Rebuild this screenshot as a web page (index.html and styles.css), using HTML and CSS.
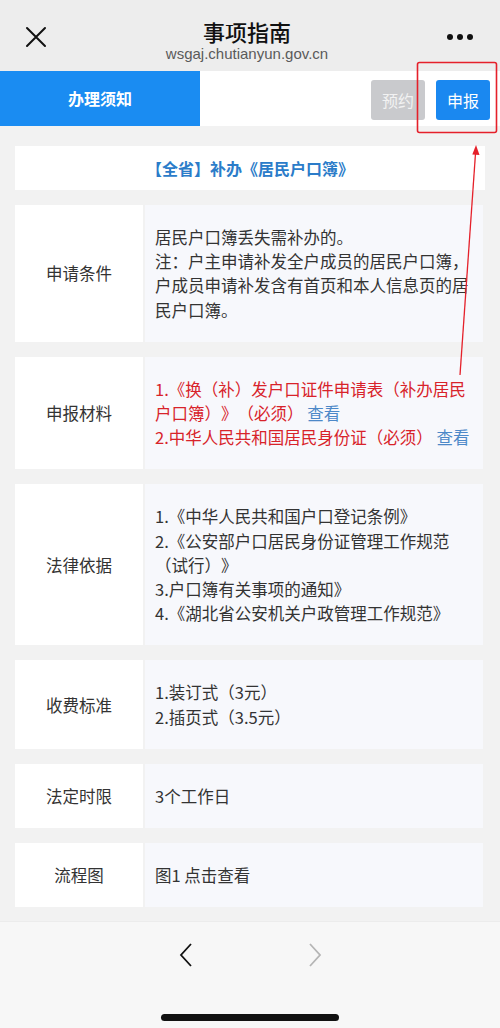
FILE: index.html
```html
<!DOCTYPE html>
<html lang="zh">
<head>
<meta charset="utf-8">
<title>事项指南</title>
<link rel="stylesheet" href="styles.css">
</head>
<body>
<div class="page">
  <header class="topbar">
    <svg class="close" width="22" height="22" viewBox="0 0 22 22"><path d="M2 2 L20 20 M20 2 L2 20" stroke="#111" stroke-width="2" fill="none" stroke-linecap="round"/></svg>
    <div class="titles">
      <div class="title">事项指南</div>
      <div class="url">wsgaj.chutianyun.gov.cn</div>
    </div>
    <svg class="more" width="26" height="8" viewBox="0 0 26 8"><circle cx="3" cy="4" r="3" fill="#111"/><circle cx="13" cy="4" r="3" fill="#111"/><circle cx="23" cy="4" r="3" fill="#111"/></svg>
  </header>

  <nav class="tabs">
    <div class="tab-active">办理须知</div>
    <div class="actions">
      <div class="btn btn-gray">预约</div>
      <div class="btn btn-blue">申报</div>
    </div>
  </nav>

  <main class="content">
    <div class="heading">【全省】补办《居民户口簿》</div>

    <div class="row">
      <div class="label">申请条件</div>
      <div class="value">居民户口簿丢失需补办的。<br>注：户主申请补发全户成员的居民户口簿，户成员申请补发含有首页和本人信息页的居民户口簿。</div>
    </div>

    <div class="row">
      <div class="label">申报材料</div>
      <div class="value"><span class="red">1.《换（补）发户口证件申请表（补办居民户口簿）》（必须）</span> <span class="link">查看</span><br><span class="red">2.中华人民共和国居民身份证（必须）</span> <span class="link">查看</span></div>
    </div>

    <div class="row">
      <div class="label">法律依据</div>
      <div class="value">1.《中华人民共和国户口登记条例》<br>2.《公安部户口居民身份证管理工作规范（试行）》<br>3.户口簿有关事项的通知》<br>4.《湖北省公安机关户政管理工作规范》</div>
    </div>

    <div class="row">
      <div class="label">收费标准</div>
      <div class="value">1.装订式（3元）<br>2.插页式（3.5元）</div>
    </div>

    <div class="row">
      <div class="label">法定时限</div>
      <div class="value">3个工作日</div>
    </div>

    <div class="row">
      <div class="label">流程图</div>
      <div class="value">图1 点击查看</div>
    </div>
  </main>

  <footer class="bottombar">
    <div class="navs">
      <svg width="14" height="24" viewBox="0 0 14 24"><path d="M12 1 L2 12 L12 23" stroke="#111" stroke-width="1.8" fill="none"/></svg>
      <svg width="14" height="24" viewBox="0 0 14 24"><path d="M2 1 L12 12 L2 23" stroke="#b5b5b5" stroke-width="1.8" fill="none"/></svg>
    </div>
    <div class="home"></div>
  </footer>

  <svg class="annot" width="500" height="1028" viewBox="0 0 500 1028">
    <rect x="417.5" y="62.5" width="79" height="70" rx="2" fill="none" stroke="#e5202a" stroke-width="1.6"/>
    <path d="M460 375 L475.6 152" stroke="#e5202a" stroke-width="1.3" fill="none"/>
    <path d="M476 145 L479.5 155 L472.3 154.5 Z" fill="#e5202a"/>
  </svg>
</div>
</body>
</html>
```

FILE: styles.css
```css
* { box-sizing: border-box; }
html, body { margin: 0; padding: 0; }
body {
  width: 500px;
  height: 1028px;
  overflow: hidden;
  font-family: "Noto Sans CJK SC", "Noto Sans", sans-serif;
  background: #f2f2f2;
  text-spacing-trim: space-all;
}
.page {
  position: relative;
  width: 500px;
  height: 1028px;
  display: flex;
  flex-direction: column;
}
.topbar {
  height: 71px;
  background: #ededed;
  display: flex;
  align-items: center;
  justify-content: space-between;
  padding: 0 27px 0 25px;
  flex-shrink: 0;
}
.close { margin-top: 2px; }
.more { margin-top: 2px; }
.titles {
  display: flex;
  flex-direction: column;
  align-items: center;
  padding-top: 8px;
}
.title {
  font-size: 22px;
  font-weight: 500;
  color: #111;
  line-height: 28px;
}
.url {
  font-family: "Liberation Sans", Arial, sans-serif;
  font-size: 15px;
  color: #5a5a5a;
  line-height: 18px;
}
.tabs {
  height: 55px;
  background: #fff;
  display: flex;
  align-items: stretch;
  justify-content: space-between;
  flex-shrink: 0;
}
.tab-active {
  width: 200px;
  background: #1a8cf2;
  color: #fff;
  font-weight: 700;
  font-size: 16px;
  display: flex;
  align-items: center;
  justify-content: center;
  padding-bottom: 2px;
}
.actions {
  display: flex;
  align-items: center;
  gap: 11px;
  padding: 2px 10px 0 0;
}
.btn {
  width: 54px;
  height: 40px;
  border-radius: 3px;
  display: flex;
  align-items: center;
  justify-content: center;
  font-size: 16px;
}
.btn-gray { background: #c9cacd; color: #f2f2f2; }
.btn-blue { background: #1a88f0; color: #fff; }
.content {
  flex: 1;
  padding: 20px 15px 0 15px;
  display: flex;
  flex-direction: column;
  gap: 15px;
  background: #f2f2f2;
}
.heading {
  height: 44px;
  background: #fff;
  color: #2b7cc9;
  font-weight: 700;
  font-size: 16px;
  display: flex;
  align-items: center;
  justify-content: center;
}
.row {
  display: flex;
  gap: 2px;
  margin-right: 2px;
}
.label {
  width: 128px;
  flex-shrink: 0;
  background: #fff;
  display: flex;
  align-items: center;
  justify-content: center;
  font-size: 16.5px;
  color: #333;
}
.value {
  flex: 1;
  background: #f7f8fc;
  padding: 20px 4px 20px 10px;
  font-size: 16.5px;
  line-height: 24.2px;
  color: #333;
}
.red { color: #d8232a; }
.link { color: #4c88c8; }
.bottombar {
  height: 107px;
  background: #f7f7f7;
  border-top: 1px solid #ececec;
  flex-shrink: 0;
  display: flex;
  flex-direction: column;
  align-items: center;
}
.navs {
  display: flex;
  gap: 115px;
  margin-top: 21px;
}
.home {
  width: 178px;
  height: 7px;
  border-radius: 4px;
  background: #111;
  margin-top: 47px;
}
.annot {
  position: absolute;
  left: 0;
  top: 0;
  pointer-events: none;
}
```
